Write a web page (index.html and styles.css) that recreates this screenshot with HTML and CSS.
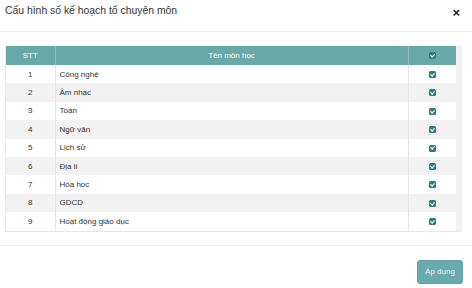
FILE: index.html
```html
<!DOCTYPE html>
<html lang="vi">
<head>
    <meta charset="UTF-8">
    <meta name="viewport" content="width=device-width, initial-scale=1.0">
    <title>Cấu hình số kế hoạch tổ chuyên môn</title>
    <link rel="stylesheet" href="styles.css">
</head>
<body>
    <div class="modal">
        <!-- Cabeçalho -->
        <div class="modal-header">
            <h1>Cấu hình số kế hoạch tổ chuyên môn</h1>
            <span class="close">&times;</span>
        </div>

        <!-- Tabela de matérias -->
        <div class="modal-body">
            <div class="table-wrap">
                <table class="subjects">
                    <thead>
                        <tr>
                            <th class="col-stt">STT</th>
                            <th class="col-name">Tên môn học</th>
                            <th class="col-check"><span class="check"></span></th>
                        </tr>
                    </thead>
                    <tbody>
                        <tr><td class="col-stt">1</td><td class="col-name">Công nghệ</td><td class="col-check"><span class="check"></span></td></tr>
                        <tr><td class="col-stt">2</td><td class="col-name">Âm nhạc</td><td class="col-check"><span class="check"></span></td></tr>
                        <tr><td class="col-stt">3</td><td class="col-name">Toán</td><td class="col-check"><span class="check"></span></td></tr>
                        <tr><td class="col-stt">4</td><td class="col-name">Ngữ văn</td><td class="col-check"><span class="check"></span></td></tr>
                        <tr><td class="col-stt">5</td><td class="col-name">Lịch sử</td><td class="col-check"><span class="check"></span></td></tr>
                        <tr><td class="col-stt">6</td><td class="col-name">Địa lí</td><td class="col-check"><span class="check"></span></td></tr>
                        <tr><td class="col-stt">7</td><td class="col-name">Hóa học</td><td class="col-check"><span class="check"></span></td></tr>
                        <tr><td class="col-stt">8</td><td class="col-name">GDCD</td><td class="col-check"><span class="check"></span></td></tr>
                        <tr><td class="col-stt">9</td><td class="col-name">Hoạt động giáo dục</td><td class="col-check"><span class="check"></span></td></tr>
                    </tbody>
                </table>
                <div class="gutter"></div>
            </div>
        </div>

        <!-- Rodapé -->
        <div class="modal-footer">
            <button class="button">Áp dụng</button>
        </div>
    </div>
</body>
</html>
```

FILE: styles.css
```css
* {
    margin: 0;
    padding: 0;
    box-sizing: border-box;
    font-family: "Liberation Sans", Arial, sans-serif;
}

body {
    background-color: #fff;
    color: #333;
    width: 472px;
    height: 288px;
    overflow: hidden;
}

.modal-header {
    height: 32px;
    display: flex;
    align-items: center;
    justify-content: space-between;
    padding: 0 12px 0 5px;
    border-bottom: 1px solid #f0f0f0;
}

.modal-header h1 {
    font-size: 10.4px;
    font-weight: normal;
    color: #333;
    margin-top: -10px;
}

.close {
    font-size: 13px;
    font-weight: bold;
    color: #222;
    margin-top: -6px;
}

.modal-body {
    padding: 14px 10px 13px 5px;
}

.table-wrap {
    display: flex;
    border-left: 1px solid #e6e6e6;
    border-bottom: 1px solid #e6e6e6;
}

.subjects {
    flex: 1;
    border-collapse: collapse;
    table-layout: fixed;
    font-size: 8px;
}

.subjects th {
    background-color: #68a8ab;
    color: #fff;
    font-weight: normal;
    height: 19px;
    text-align: center;
    border-right: 1px solid #8dbec0;
}

.subjects td {
    height: 18.4px;
    border-right: 1px solid #e6e6e6;
}

.subjects tbody tr:nth-child(even) {
    background-color: #f2f2f2;
}

.col-stt {
    width: 49px;
    text-align: center;
}

td.col-name {
    padding-left: 4px;
}

.col-check {
    width: 48px;
    text-align: center;
}

.subjects th.col-check,
.subjects td.col-check {
    border-right: none;
}

.check {
    display: inline-block;
    width: 7px;
    height: 7px;
    border-radius: 1.5px;
    background-color: #2f7c82;
    position: relative;
    vertical-align: middle;
}

.check::after {
    content: "";
    position: absolute;
    left: 2.2px;
    top: 0.8px;
    width: 1.6px;
    height: 3.2px;
    border: solid #fff;
    border-width: 0 1px 1px 0;
    transform: rotate(45deg);
}

.gutter {
    width: 6px;
    background-color: #f0f0f0;
}

.modal-footer {
    border-top: 1px solid #f0f0f0;
    display: flex;
    justify-content: flex-end;
    padding: 14px 9px 0 0;
}

.button {
    width: 46px;
    height: 24px;
    background-color: #6aa9ad;
    border: 1px solid #62a2a6;
    border-radius: 3px;
    color: #eef6f6;
    font-size: 8px;
    cursor: pointer;
}
```
